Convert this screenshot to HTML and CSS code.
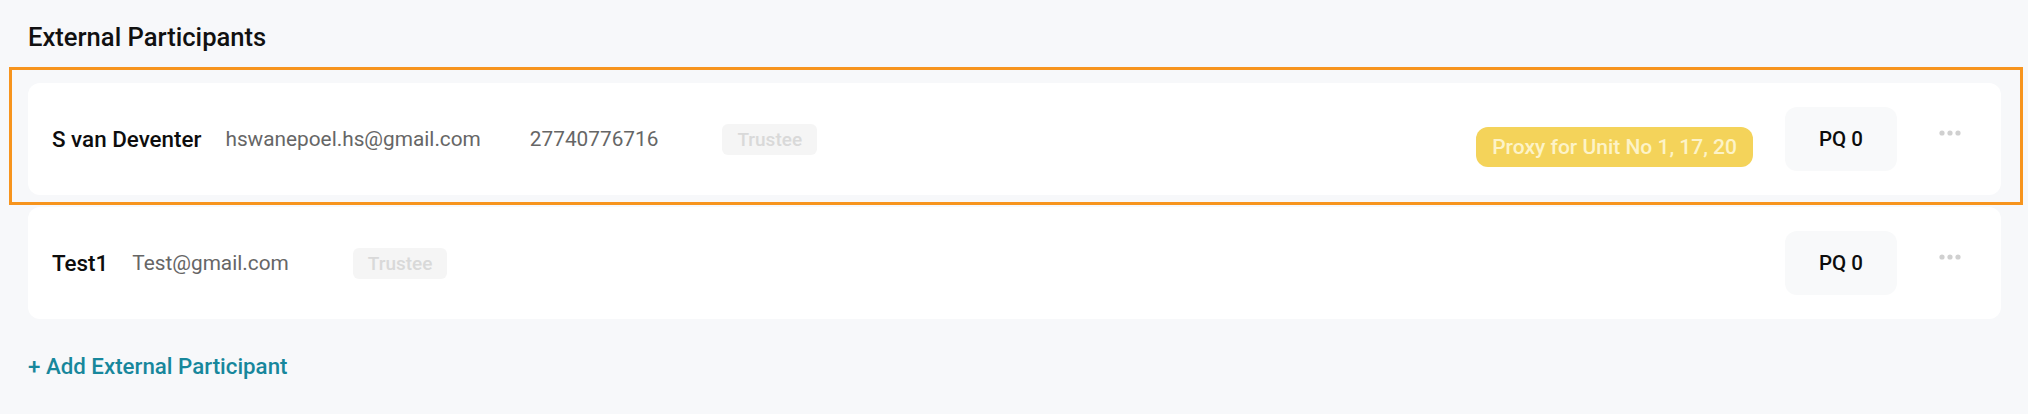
FILE: index.html
```html
<!DOCTYPE html>
<html lang="en">
<head>
<meta charset="utf-8">
<title>External Participants</title>
<link rel="stylesheet" href="styles.css">
</head>
<body>
<main class="page">
  <h2 class="section-title">External Participants</h2>
  <div class="list">
    <div class="participant">
      <span class="name">S van Deventer</span>
      <span class="email">hswanepoel.hs@gmail.com</span>
      <span class="phone">27740776716</span>
      <span class="role">Trustee</span>
      <span class="proxy">Proxy for Unit No 1, 17, 20</span>
      <div class="pq">PQ 0</div>
      <button class="more" type="button" aria-label="More options">
        <svg width="22" height="6" viewBox="0 0 22 6"><circle cx="3" cy="3" r="2.6"/><circle cx="11" cy="3" r="2.6"/><circle cx="19" cy="3" r="2.6"/></svg>
      </button>
    </div>
    <div class="participant">
      <span class="name">Test1</span>
      <span class="email">Test@gmail.com</span>
      <span class="role">Trustee</span>
      <div class="pq pq-end">PQ 0</div>
      <button class="more" type="button" aria-label="More options">
        <svg width="22" height="6" viewBox="0 0 22 6"><circle cx="3" cy="3" r="2.6"/><circle cx="11" cy="3" r="2.6"/><circle cx="19" cy="3" r="2.6"/></svg>
      </button>
    </div>
    <div class="highlight"></div>
  </div>
  <a class="add-link" href="#">+ Add External Participant</a>
</main>
</body>
</html>
```

FILE: styles.css
```css
* { box-sizing: border-box; }

html, body {
  margin: 0;
  padding: 0;
  background: #f7f8fa;
}

body {
  font-family: Roboto, "Liberation Sans", Arial, sans-serif;
  color: #111;
}

.page {
  padding: 21px 27px 0 28px;
}

.section-title {
  margin: 0 0 30px;
  font-size: 25.6px;
  line-height: 32px;
  font-weight: 500;
  color: #111;
}

.list {
  position: relative;
  display: flex;
  flex-direction: column;
  gap: 12px;
}

.participant {
  display: flex;
  align-items: center;
  height: 112px;
  padding: 24px 40px 24px 24px;
  background: #ffffff;
  border-radius: 12px;
}

.name {
  font-size: 22.4px;
  font-weight: 500;
  color: #0d0d0d;
  margin-right: 24px;
  white-space: nowrap;
}

.email,
.phone {
  font-size: 20.8px;
  font-weight: 400;
  color: #666;
  white-space: nowrap;
}

.phone {
  margin-left: 49px;
}

.role {
  margin-left: 64px;
  height: 31px;
  line-height: 31px;
  padding: 0 15px;
  background: #f5f5f5;
  color: #d9d9d9;
  font-size: 19px;
  font-weight: 500;
  border-radius: 6px;
}

.proxy {
  margin-left: auto;
  margin-top: 16px;
  height: 40px;
  line-height: 40px;
  padding: 0 16px;
  background: #f4d35a;
  color: #fdf3c8;
  font-size: 21px;
  font-weight: 500;
  border-radius: 12px;
  white-space: nowrap;
}

.pq {
  margin-left: 32px;
  width: 112px;
  height: 64px;
  display: flex;
  align-items: center;
  justify-content: center;
  background: #f8f9fa;
  border-radius: 12px;
  font-size: 20.5px;
  font-weight: 500;
  color: #0d0d0d;
}

.pq-end {
  margin-left: auto;
}

.more {
  align-self: flex-start;
  margin: 23px 0 0 42px;
  padding: 0;
  width: 22px;
  height: 6px;
  border: 0;
  background: none;
  display: flex;
}

.more svg {
  fill: #d0d0d0;
}

.highlight {
  position: absolute;
  top: -16px;
  left: -19px;
  width: 2014px;
  height: 138px;
  border: 3px solid #f7941d;
  pointer-events: none;
}

.add-link {
  display: inline-block;
  margin-top: 33px;
  font-size: 22.3px;
  line-height: 28px;
  font-weight: 500;
  color: #17879c;
  text-decoration: none;
}
```
